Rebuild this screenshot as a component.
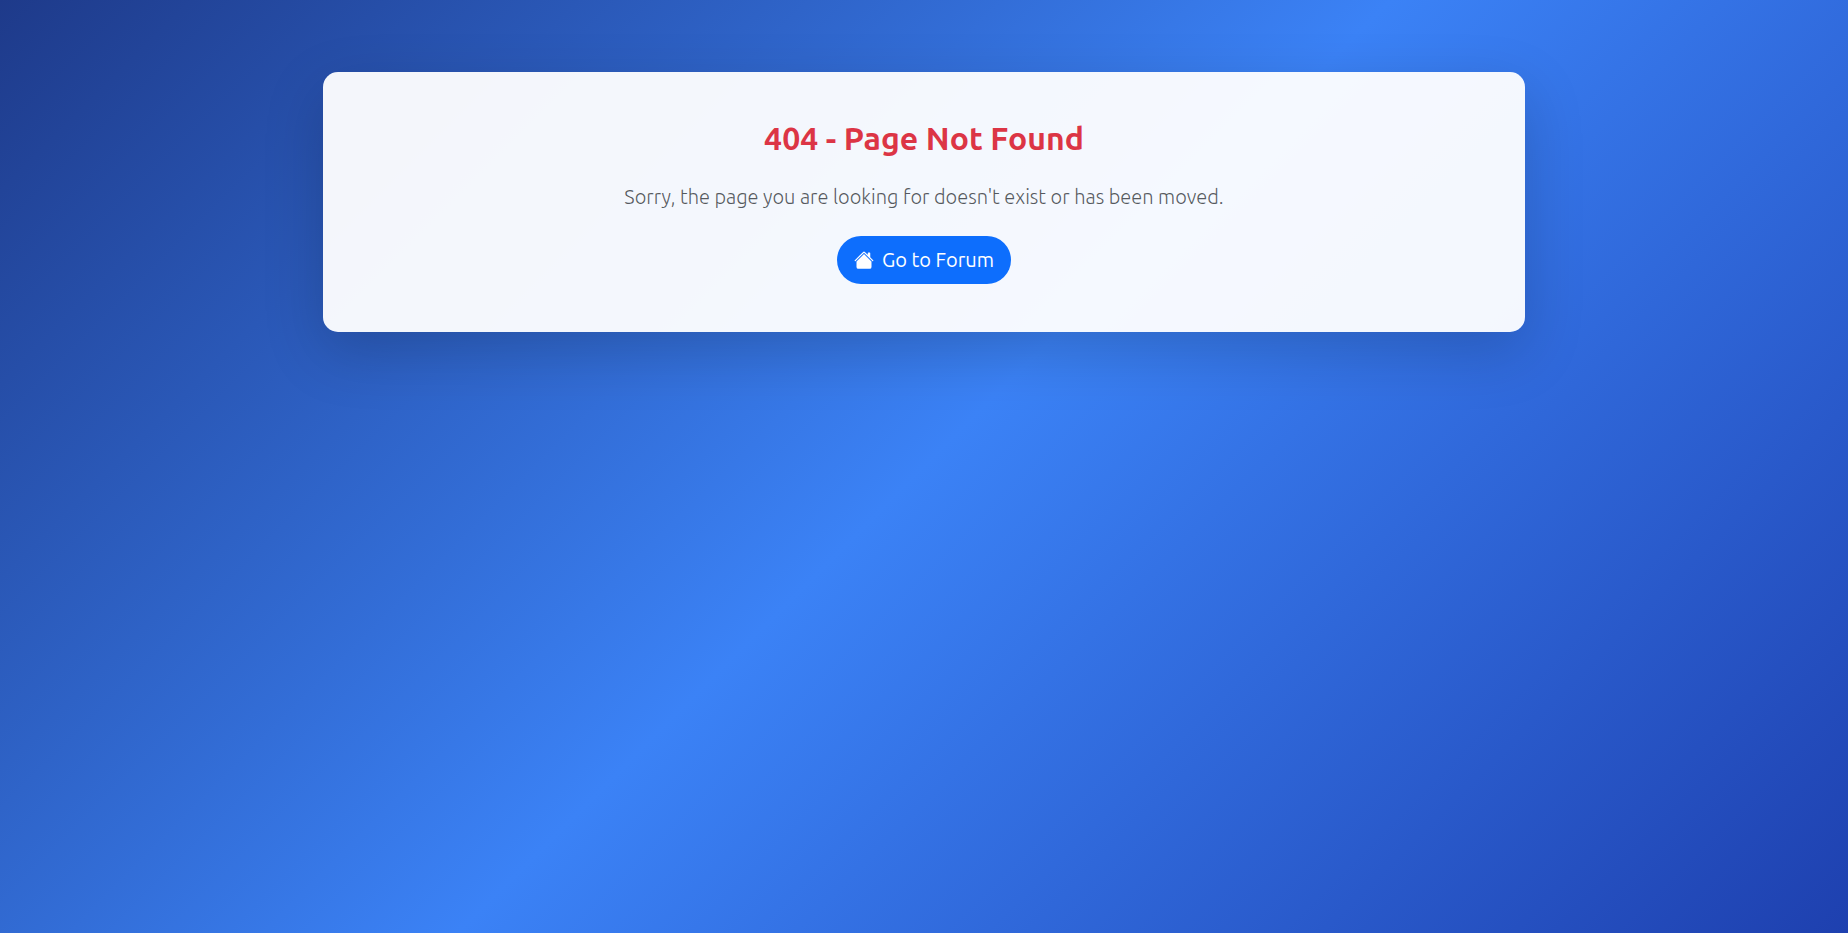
<main class="page">
  <section class="card">
    <h1>404 - Page Not Found</h1>
    <p>Sorry, the page you are looking for doesn't exist or has been moved.</p>
    <a class="button" href="#forum">
      <svg viewBox="0 0 16 16" fill="currentColor" aria-hidden="true">
        <path d="M8.707 1.5a1 1 0 0 0-1.414 0L.646 8.146a.5.5 0 0 0 .708.708L8 2.207l6.646 6.647a.5.5 0 0 0 .708-.708L13 5.793V2.5a.5.5 0 0 0-.5-.5h-1a.5.5 0 0 0-.5.5v1.293z" />
        <path d="m8 3.293 6 6V13.5a1.500 1.500 0 0 1-1.500 1.500h-9A1.500 1.500 0 0 1 2 13.500V9.293z" />
      </svg>
      <span>Go to Forum</span>
    </a>
  </section>
</main>

<style>
  :global(body) {
    margin: 0;
  }

  .page {
    box-sizing: border-box;
    min-height: 100vh;
    padding: 72px 24px;
    background: linear-gradient(135deg, #1e3a8a 0%, #3b82f6 50%, #1e40af 100%);
    font-family: Ubuntu, "Open Sans", "Noto Sans", sans-serif;
  }

  .card {
    box-sizing: border-box;
    max-width: 1202px;
    margin: 0 auto;
    padding: 48px;
    border-radius: 15px;
    background: rgba(255, 255, 255, 0.95);
    box-shadow: 0 20px 60px rgba(0, 0, 0, 0.18);
    text-align: center;
  }

  h1 {
    margin: 0 0 26px;
    color: #dc3545;
    font-size: 32px;
    font-weight: 600;
    line-height: 36px;
  }

  p {
    margin: 0 0 24px;
    color: rgba(33, 37, 41, 0.75);
    font-size: 20px;
    font-weight: 300;
    line-height: 30px;
  }

  .button {
    display: inline-flex;
    align-items: center;
    gap: 8px;
    padding: 9px 17px;
    border-radius: 50px;
    background: #0d6efd;
    color: #fff;
    font-size: 20px;
    line-height: 30px;
    text-decoration: none;
    vertical-align: top;
  }

  svg {
    width: 20px;
    height: 20px;
  }
</style>
